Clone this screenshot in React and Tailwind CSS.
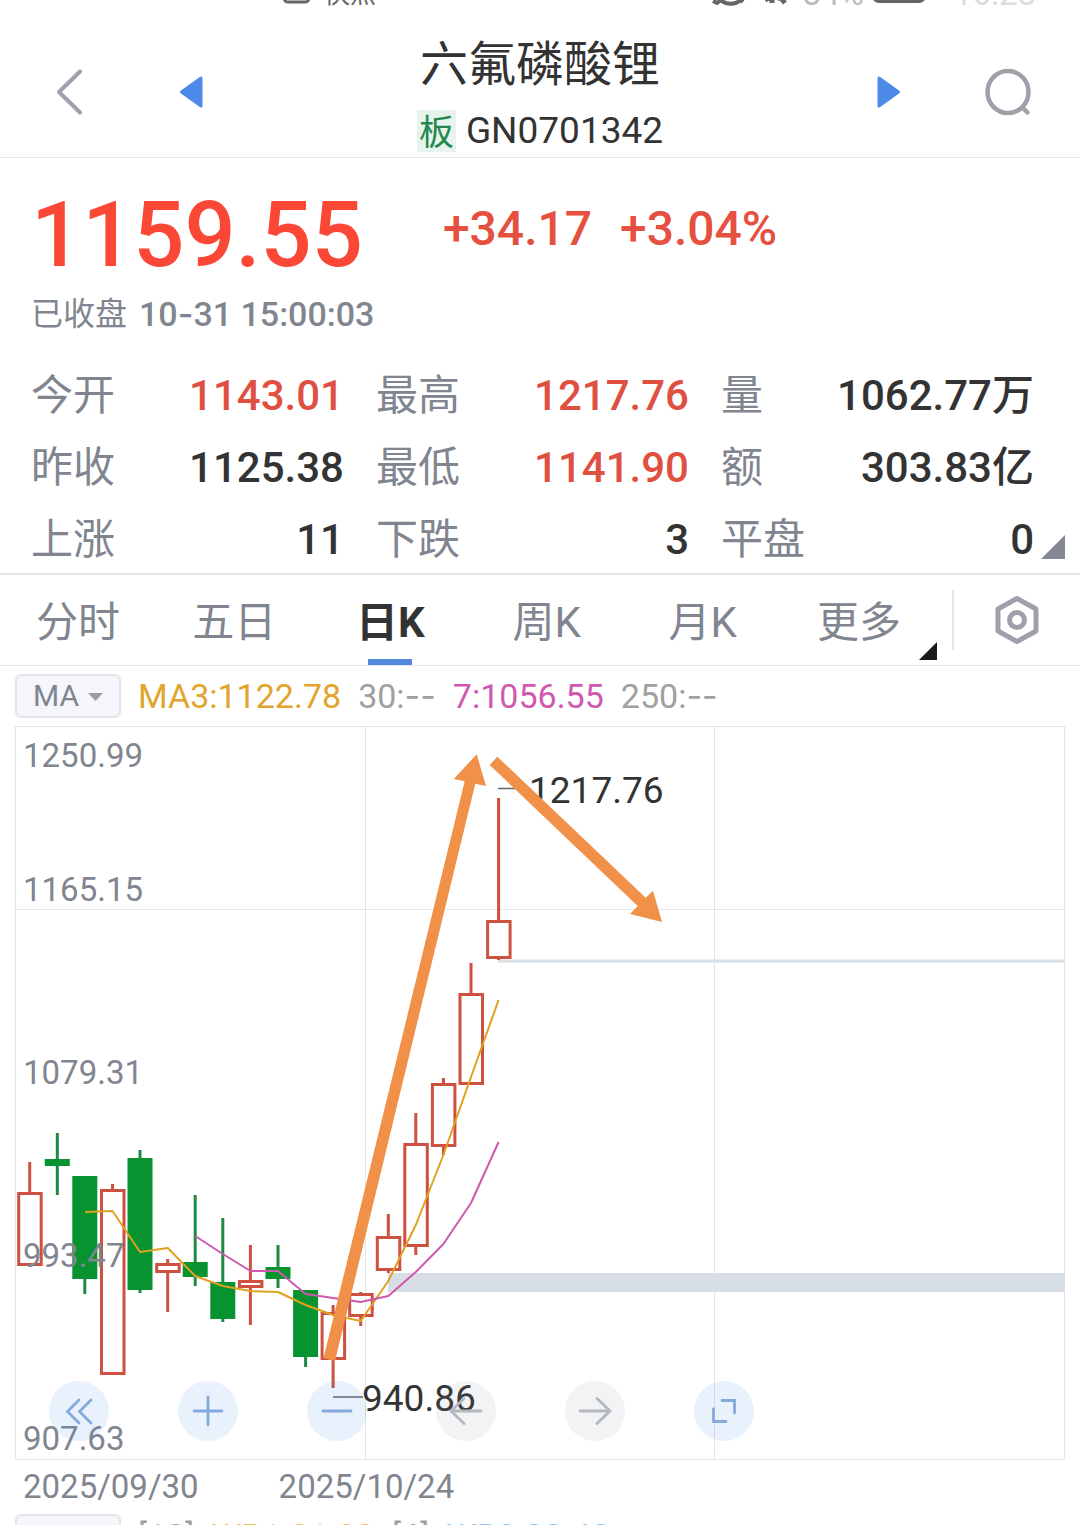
import React from 'react';

const stats = [
  { label: '今开', value: '1143.01', up: true },
  { label: '最高', value: '1217.76', up: true },
  { label: '量', value: '1062.77万' },
  { label: '昨收', value: '1125.38' },
  { label: '最低', value: '1141.90', up: true },
  { label: '额', value: '303.83亿' },
  { label: '上涨', value: '11' },
  { label: '下跌', value: '3' },
  { label: '平盘', value: '0' },
];

const tabs = ['分时', '五日', '日K', '周K', '月K', '更多'];

// x = centre, top/bottom = body, high/low = wick
const candles = [
  { x: 29.7, top: 1192, bottom: 1266, high: 1162, low: 1266, up: true },
  { x: 57.3, top: 1159, bottom: 1166, high: 1133, low: 1195 },
  { x: 84.8, top: 1176, bottom: 1279, high: 1176, low: 1294 },
  { x: 112.5, top: 1189, bottom: 1375, high: 1184, low: 1375, up: true },
  { x: 140, top: 1158, bottom: 1290, high: 1150, low: 1293 },
  { x: 167.7, top: 1263, bottom: 1273, high: 1259, low: 1312, up: true },
  { x: 195.2, top: 1262, bottom: 1277, high: 1195, low: 1286 },
  { x: 222.8, top: 1282, bottom: 1319, high: 1218, low: 1322 },
  { x: 250.4, top: 1280, bottom: 1288, high: 1245, low: 1325, up: true },
  { x: 278, top: 1267, bottom: 1279, high: 1245, low: 1288 },
  { x: 305.6, top: 1290, bottom: 1357, high: 1290, low: 1367 },
  { x: 333.1, top: 1312, bottom: 1360, high: 1305, low: 1388, up: true },
  { x: 360.7, top: 1293, bottom: 1317, high: 1292, low: 1326, up: true },
  { x: 388.3, top: 1236, bottom: 1271, high: 1214, low: 1273, up: true },
  { x: 415.8, top: 1143, bottom: 1247, high: 1113, low: 1255, up: true },
  { x: 443.4, top: 1083, bottom: 1147, high: 1078, low: 1155, up: true },
  { x: 471, top: 993, bottom: 1085, high: 963, low: 1085, up: true },
  { x: 498.6, top: 920, bottom: 959, high: 798, low: 960, up: true },
];

const ma3 =
  '85,1212 112.5,1211 140,1252 167.7,1248 195.2,1276 222.8,1286 250.4,1291 278,1292 305.6,1305 333.1,1315 360.7,1321 388.3,1281 415.8,1225 443.4,1155 471,1077 498.6,1000';
const ma7 =
  '195.2,1236 222.8,1254 250.4,1271 278,1271 305.6,1294 333.1,1298 360.7,1302 388.3,1296 415.8,1272 443.4,1244 471,1203 498.6,1142';

const priceLabels = [
  { text: '1250.99', y: 767 },
  { text: '1165.15', y: 901 },
  { text: '1079.31', y: 1084 },
  { text: '993.47', y: 1267 },
  { text: '907.63', y: 1450 },
];

function StatusBar() {
  return (
    <div className="flex h-1.5 items-end overflow-hidden pl-[283px] pr-11 text-[33px] leading-6 text-[#666]">
      <svg width="27" height="20" viewBox="0 0 27 20">
        <rect x="1" y="-4" width="25" height="20" rx="4" fill="none" stroke="#666" strokeWidth="3" />
      </svg>
      <span className="ml-3.5 text-[26px]">快点</span>
      <svg className="ml-auto" width="80" height="24" viewBox="0 0 80 24">
        <path d="M2 19l4 2 4-3M10 18c5 5 14 5 20 0l2 2" fill="none" stroke="#666" strokeWidth="4" />
        <path d="M54 18l4-2M61 12v9M66 17l3-2 5 6" fill="none" stroke="#666" strokeWidth="5" />
      </svg>
      <span className="ml-3 text-[#bbb]">84%</span>
      <svg className="ml-2" width="54" height="24" viewBox="0 0 54 24">
        <rect x="0" y="-4" width="54" height="25" rx="7" fill="#666" />
      </svg>
      <span className="ml-7 text-[#ddd]">16:28</span>
    </div>
  );
}

function Header() {
  return (
    <header className="flex items-center justify-between border-b border-[#e4e6e9] pb-[5px] pl-[55px] pr-12 pt-[31px]">
      <div className="flex items-center gap-24 pb-1.5">
        <button type="button" aria-label="返回">
          <svg width="28" height="46" viewBox="0 0 28 46" fill="none" stroke="#a0a0aa" strokeWidth="4" strokeLinecap="round" strokeLinejoin="round">
            <path d="M25 2.500L4 23l21 20.500" />
          </svg>
        </button>
        <button type="button" aria-label="上一个">
          <svg width="24" height="32" viewBox="0 0 24 32" fill="#4c89e8" stroke="#4c89e8" strokeWidth="3" strokeLinejoin="round">
            <path d="M2.500 16L22 2v28z" />
          </svg>
        </button>
      </div>
      <div className="flex flex-col items-center gap-[17px] text-[#333]">
        <h1 className="text-[48px] leading-[56px]">六氟磷酸锂</h1>
        <div className="flex items-center gap-2.5">
          <span className="bg-[#e8f3ee] px-0.5 pt-1.5 text-[35px] leading-9 text-[#23884c]">板</span>
          <span className="text-[37px] leading-[42px]">GN0701342</span>
        </div>
      </div>
      <div className="flex items-center gap-[83px] pb-1.5">
        <button type="button" aria-label="下一个">
          <svg width="24" height="32" viewBox="0 0 24 32" fill="#4c89e8" stroke="#4c89e8" strokeWidth="3" strokeLinejoin="round">
            <path d="M21.500 16L2 2v28z" />
          </svg>
        </button>
        <button type="button" aria-label="搜索">
          <svg width="48" height="48" viewBox="0 0 48 48" fill="none" stroke="#a0a0aa" strokeWidth="4.500">
            <ellipse cx="24" cy="24" rx="20.500" ry="21" />
            <path d="M38.500 39.500l5 5" strokeLinecap="round" />
          </svg>
        </button>
      </div>
    </header>
  );
}

function Quote() {
  return (
    <section className="relative border-b-2 border-[#e4e5e7] pb-px pl-[31px] pr-[46px] pt-8">
      <div className="flex items-start gap-20 font-medium">
        <p className="text-[90px] leading-[92px] text-[#fb4836]">1159.55</p>
        <p className="flex gap-7 text-[48px] leading-[78px] text-[#e55040]">
          <span>+34.17</span>
          <span>+3.04%</span>
        </p>
      </div>
      <p className="mt-3.5 flex h-9 gap-3 text-[34px] leading-9 text-[#80858f]">
        <span className="text-[32px]">已收盘</span>
        <span className="font-medium">
          10<span className="font-['Inter']">-</span>31 15:00:03
        </span>
      </p>
      <dl className="mt-8 grid grid-cols-3 gap-x-8 gap-y-2 text-[42px] leading-[64px]">
        {stats.map((s) => (
          <div key={s.label} className="flex justify-between">
            <dt className="text-[#80858f]">{s.label}</dt>
            <dd className={s.up ? 'font-medium text-[#e05041]' : 'font-medium text-[#333]'}>{s.value}</dd>
          </div>
        ))}
      </dl>
      <svg className="absolute bottom-3.5 right-[15px]" width="24" height="24" viewBox="0 0 24 24">
        <path d="M24 0v24H0z" fill="#848893" />
      </svg>
    </section>
  );
}

function Tabs() {
  return (
    <nav className="flex h-[91px] border-b border-[#e4e6e9] text-[42px] text-[#80858f]">
      <div className="grid flex-1 grid-cols-6">
        {tabs.map((tab) => (
          <button
            key={tab}
            type="button"
            className={tab === '日K' ? 'relative pt-1 font-bold text-[#333]' : 'relative pt-1'}
          >
            {tab}
            {tab === '日K' && <span className="absolute bottom-0 left-14 h-1.5 w-11 bg-[#5288dd]" />}
            {tab === '更多' && (
              <svg className="absolute bottom-[5px] right-0" width="18" height="18" viewBox="0 0 18 18">
                <path d="M18 0v18H0z" fill="#1a1a1a" />
              </svg>
            )}
          </button>
        ))}
      </div>
      <div className="flex w-[143px] items-center pl-[15px]">
        <div className="h-[60px] border-l-2 border-[#e4e5ea]" />
        <button type="button" aria-label="设置" className="flex flex-1 justify-center">
          <svg width="46" height="52" viewBox="0 0 46 52" fill="none" stroke="#a0a0aa" strokeWidth="5" strokeLinejoin="round">
            <path d="M23 4.500L42 15v22L23 47.500L4 37V15z" />
            <circle cx="23" cy="26" r="7.500" />
          </svg>
        </button>
      </div>
    </nav>
  );
}

function IndicatorRow({ name, children }) {
  return (
    <div className="flex h-11 items-center gap-[17px] whitespace-nowrap text-[34px] leading-[44px]">
      <div className="relative h-11 w-[106px] shrink-0">
        <select
          aria-label={name}
          className="block h-full w-full appearance-none rounded-md border-2 border-[#e3e4ec] bg-[#f5f6fb] pl-4 text-[30px] leading-10 text-[#80858f]"
        >
          <option>{name}</option>
        </select>
        <svg className="pointer-events-none absolute right-[18px] top-[19px]" width="15" height="8" viewBox="0 0 15 8">
          <path d="M0 0h15L7.500 8z" fill="#9a9ca6" />
        </svg>
      </div>
      {children}
    </div>
  );
}

function Candle({ x, top, bottom, high, low, up }) {
  if (up) {
    return (
      <g stroke="#cd5040" strokeWidth="3" fill="none">
        <path d={`M${x} ${high}V${top}M${x} ${bottom}V${low}`} />
        <rect x={x - 11} y={top + 1.5} width="22.500" height={bottom - top - 3} />
      </g>
    );
  }
  return (
    <g fill="#069330">
      <rect x={x - 1.5} y={high} width="3" height={low - high} fill="#1d8a42" />
      <rect x={x - 12.5} y={top} width="25" height={bottom - top} />
    </g>
  );
}

function Chart() {
  return (
    <div className="relative">
      <svg className="block h-auto w-full" viewBox="15 726 1050 734" fontSize="33">
        <g fill="none" stroke="#e3e5e8">
          <rect x="15.500" y="726.500" width="1049" height="733" />
          <path d="M15 909.500H1065M365.500 727V1459M714.500 727V1459" />
        </g>
        <rect x="388" y="1273" width="677" height="19" fill="#d8dee6" />
        <rect x="498" y="959.500" width="567" height="3" fill="#d9e0e5" />
        {candles.map((c) => (
          <Candle key={c.x} {...c} />
        ))}
        <g fill="none" strokeWidth="2" strokeLinejoin="round">
          <polyline points={ma3} stroke="#e0a020" />
          <polyline points={ma7} stroke="#cf57ae" />
        </g>
        <g fill="#80858f">
          {priceLabels.map((p) => (
            <text key={p.text} x="23" y={p.y}>
              {p.text}
            </text>
          ))}
        </g>
        <path d="M498 788.500H530M333 1397H363" stroke="#666" strokeWidth="1.500" />
        <g fill="#333" fontSize="37">
          <text x="529" y="803">1217.76</text>
          <text x="362" y="1411">940.86</text>
        </g>
        <g fill="#f19149">
          <path d="M323.500 1358L464.700 781.300L453.700 779L476.700 754.300L486 786L475.300 783.700L335 1361z" />
          <path d="M497.300 756.700L645.700 897.700L653 890.700L662 922L630 914L637.700 906L489.700 765z" />
        </g>
      </svg>
      <div className="absolute bottom-[19px] left-[34px] flex gap-[69px]">
        <ToolButton label="更早" blue d="M30 19L18.500 30.500L30 42M42 19L30.500 30.500L42 42" />
        <ToolButton label="放大" blue d="M16 30H44M30 16V44" />
        <ToolButton label="缩小" blue d="M16 30H44" />
        <ToolButton label="左移" d="M45 30H15M28 17.500L15 30L28 42.500" />
        <ToolButton label="右移" d="M15 30H45M32 17.500L45 30L32 42.500" />
        <ToolButton label="全屏" blue d="M28 19.500H40.500V32M19.500 28V40.500H32" />
      </div>
    </div>
  );
}

function ToolButton({ label, d, blue }) {
  return (
    <button
      type="button"
      aria-label={label}
      className={
        blue
          ? 'size-[60px] rounded-full bg-[#4c89e8]/12 text-[#84a9dc]'
          : 'size-[60px] rounded-full bg-[#80858f]/10 text-[#b4b8be]'
      }
    >
      <svg width="60" height="60" viewBox="0 0 60 60" fill="none" stroke="currentColor" strokeWidth="2.800" strokeLinecap="round">
        <path d={d} />
      </svg>
    </button>
  );
}

function Dashes() {
  return <span className="font-['Inter']">--</span>;
}

export default function App() {
  return (
    <div className="h-screen overflow-hidden bg-white font-['Roboto','Noto_Sans_CJK_SC',sans-serif]">
      <StatusBar />
      <Header />
      <main>
        <Quote />
        <Tabs />
        <div className="px-[15px]">
          <div className="py-2">
            <IndicatorRow name="MA">
              <span className="text-[#e2a42c]">MA3:1122.78</span>
              <span className="text-[#a0a0a0]">30:<Dashes /></span>
              <span className="text-[#d158b0]">7:1056.55</span>
              <span className="text-[#a0a0a0]">250:<Dashes /></span>
            </IndicatorRow>
          </div>
          <Chart />
          <div className="flex gap-20 pl-2 text-[33px] leading-[54px] text-[#80858f]">
            <span>2025/09/30</span>
            <span>2025/10/24</span>
          </div>
          <IndicatorRow name="WR">
            <span className="text-[#a0a0a0]">[10]</span>
            <span className="text-[#f0c060]">WR1:21.83</span>
            <span className="text-[#a0a0a0]">[6]</span>
            <span className="text-[#8cc0f0]">WR2:22.42</span>
          </IndicatorRow>
        </div>
      </main>
    </div>
  );
}
